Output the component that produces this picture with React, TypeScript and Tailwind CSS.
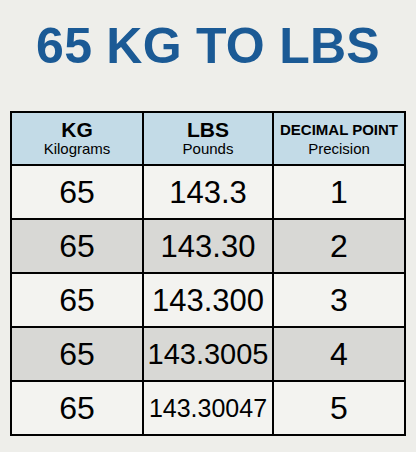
const rows = [
  { kg: "65", lbs: "143.3", lbsSize: "text-[31px]", dp: "1", shade: false },
  { kg: "65", lbs: "143.30", lbsSize: "text-[31px]", dp: "2", shade: true },
  { kg: "65", lbs: "143.300", lbsSize: "text-[31px]", dp: "3", shade: false },
  { kg: "65", lbs: "143.3005", lbsSize: "text-[29px]", dp: "4", shade: true },
  { kg: "65", lbs: "143.30047", lbsSize: "text-[25px]", dp: "5", shade: false },
];

export default function App() {
  return (
    <div className="w-[416px] h-[452px] bg-[#eeeeea] pt-[21px] font-['Liberation_Sans',Arial,sans-serif] text-black">
      <h1 className="text-center text-[50px] leading-[50px] font-bold text-[#1b5a95] tracking-[0.005em]">
        65 KG TO LBS
      </h1>

      <table className="mt-[40px] ml-[10px] w-[394px] table-fixed border-collapse border-2 border-black">
        <colgroup>
          <col className="w-[132px]" />
          <col className="w-[130px]" />
          <col className="w-[132px]" />
        </colgroup>
        <thead>
          <tr className="h-[53px] bg-[#c3dbe7]">
            <th className="border-2 border-black p-0 align-middle">
              <div className="text-[21px] leading-[21px] font-bold">KG</div>
              <div className="text-[15px] leading-[18px] font-normal">Kilograms</div>
            </th>
            <th className="border-2 border-black p-0 align-middle">
              <div className="text-[21px] leading-[21px] font-bold">LBS</div>
              <div className="text-[15px] leading-[18px] font-normal">Pounds</div>
            </th>
            <th className="border-2 border-black p-0 align-middle">
              <div className="text-[15px] leading-[21px] font-bold whitespace-nowrap">DECIMAL POINT</div>
              <div className="text-[15px] leading-[18px] font-normal">Precision</div>
            </th>
          </tr>
        </thead>
        <tbody>
          {rows.map((r, i) => (
            <tr key={i} className={`h-[54px] ${r.shade ? "bg-[#d8d8d5]" : "bg-[#f3f3f0]"}`}>
              <td className="border-2 border-black p-0 text-center text-[32px] leading-none">{r.kg}</td>
              <td className={`border-2 border-black p-0 text-center leading-none whitespace-nowrap ${r.lbsSize}`}>{r.lbs}</td>
              <td className="border-2 border-black p-0 text-center text-[32px] leading-none">{r.dp}</td>
            </tr>
          ))}
        </tbody>
      </table>
    </div>
  );
}
